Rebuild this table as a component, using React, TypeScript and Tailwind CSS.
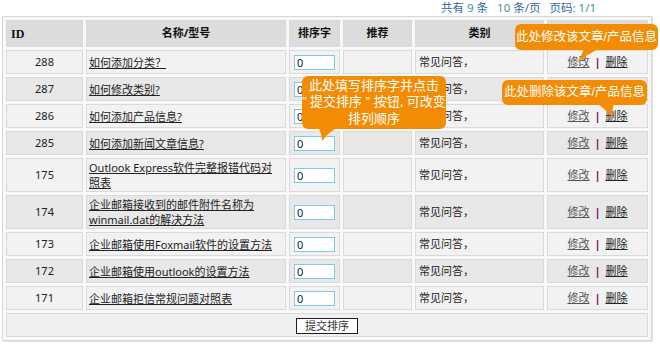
const rows = [
  { id: 288, name: ["如何添加分类？"] },
  { id: 287, name: ["如何修改类别?"] },
  { id: 286, name: ["如何添加产品信息?"] },
  { id: 285, name: ["如何添加新闻文章信息?"] },
  { id: 175, name: ["Outlook Express软件完整报错代码对", "照表"], tall: true },
  { id: 174, name: ["企业邮箱接收到的邮件附件名称为", "winmail.dat的解决方法"], tall: true },
  { id: 173, name: ["企业邮箱使用Foxmail软件的设置方法"] },
  { id: 172, name: ["企业邮箱使用outlook的设置方法"] },
  { id: 171, name: ["企业邮箱拒信常规问题对照表"] },
];

const cell = "border border-[#dadada] p-0";
const orange = "bg-[#f28c05]";

export default function App() {
  return (
    <div className="relative w-[660px] h-[346px] bg-white text-[11px] text-[#222] font-['Noto_Sans','Noto_Sans_CJK_SC',sans-serif]">
      {/* paging info */}
      <div className="h-[16px] flex justify-end items-center pr-[64px] text-[11.5px] text-[#36689c]">
        共有&nbsp;<span className="text-[#3a9a8a]">9</span>&nbsp;条&nbsp;&nbsp;&nbsp;
        <span className="text-[#3a9a8a]">10</span>&nbsp;条/页&nbsp;&nbsp;&nbsp;页码:&nbsp;
        <span className="text-[#3a9a8a]">1/1</span>
      </div>

      <table className="ml-[2px] w-[650px] table-fixed border-separate border-spacing-[3px] border border-[#d6d6d6] bg-[#f8f8f8] shadow-[1px_1px_0_#e6e6e6]">
        <colgroup>
          <col className="w-[77px]" />
          <col className="w-[200px]" />
          <col className="w-[51px]" />
          <col className="w-[69px]" />
          <col className="w-[129px]" />
          <col className="w-[101px]" />
        </colgroup>
        <thead>
          <tr className="bg-[#dcdcdc] font-bold text-[#111]">
            <th className={`${cell} h-[27px] text-left pl-[4px] text-[12px] font-['Liberation_Serif',serif]`}>ID</th>
            <th className={`${cell} text-center`}>名称/型号</th>
            <th className={`${cell} text-center`}>排序字</th>
            <th className={`${cell} text-center`}>推荐</th>
            <th className={`${cell} text-center`}>类别</th>
            <th className={cell}></th>
          </tr>
        </thead>
        <tbody>
          {rows.map((r, i) => (
            <tr key={r.id} className={i % 2 === 0 ? "bg-[#f2f2f2]" : "bg-[#e8e8e8]"}>
              <td className={`${cell} ${r.tall ? "h-[34px]" : "h-[24px]"} text-center`}>{r.id}</td>
              <td className={`${cell} pl-[2px] leading-[15px] whitespace-nowrap overflow-hidden`}>
                <a className="underline text-[#222] cursor-pointer">
                  {r.name.map((line, j) => (
                    <span key={j}>
                      {j > 0 && <br />}
                      {line}
                    </span>
                  ))}
                </a>
              </td>
              <td className={`${cell} pl-[4px]`}>
                <input
                  readOnly
                  value="0"
                  className="block w-[41px] h-[15px] border border-[#7ccbe6] bg-white px-[2px] text-[11px] leading-[13px] outline-none"
                />
              </td>
              <td className={cell}></td>
              <td className={`${cell} pl-[3px]`}>常见问答，</td>
              <td className={`${cell} text-center`}>
                <a className="underline text-[#555]">修改</a>
                <span className="text-[#7a0a70] font-bold mx-[5px]">|</span>
                <a className="underline text-[#222]">删除</a>
              </td>
            </tr>
          ))}
          <tr className="bg-[#f0f0f0]">
            <td colSpan={6} className={`${cell} h-[24px] text-center`}>
              <button className="inline-flex items-center justify-center w-[62px] h-[16px] border border-[#1e1e1e] bg-white text-[11px] leading-none text-[#333] align-middle">
                提交排序
              </button>
            </td>
          </tr>
        </tbody>
      </table>

      {/* callout tails */}
      <svg className="absolute left-0 top-0 pointer-events-none" width="660" height="346">
        <path d="M584 48 L600 48 Q588 54 576 63 Q582 56 584 48 Z" fill="#f28c05" />
        <path d="M597 103 L614 103 Q612 110 612 117 Q606 110 597 103 Z" fill="#f28c05" />
        <path d="M318 127 L338 127 Q328 133 322 141 Q322 134 318 127 Z" fill="#f28c05" />
      </svg>

      {/* callout: edit */}
      <div className={`absolute left-[515px] top-[24px] w-[143px] h-[26px] rounded-[6px] ${orange} text-white text-[12.5px] whitespace-nowrap flex items-center justify-center font-['Liberation_Sans','Noto_Sans_CJK_SC',sans-serif]`}>
        此处修改该文章/产品信息
      </div>

      {/* callout: delete */}
      <div className={`absolute left-[502px] top-[80px] w-[145px] h-[25px] rounded-[6px] ${orange} text-white text-[12.5px] whitespace-nowrap flex items-center justify-center font-['Liberation_Sans','Noto_Sans_CJK_SC',sans-serif]`}>
        此处删除该文章/产品信息
      </div>

      {/* callout: sort */}
      <div className={`absolute left-[302px] top-[76px] w-[144px] h-[53px] rounded-[6px] ${orange} text-white text-[13px] leading-[16.5px] whitespace-nowrap flex flex-col items-center justify-center font-['Liberation_Sans','Noto_Sans_CJK_SC',sans-serif]`}>
        <span>此处填写排序字并点击</span>
        <span>” 提交排序 ” 按钮, 可改变</span>
        <span>排列顺序</span>
      </div>
    </div>
  );
}
